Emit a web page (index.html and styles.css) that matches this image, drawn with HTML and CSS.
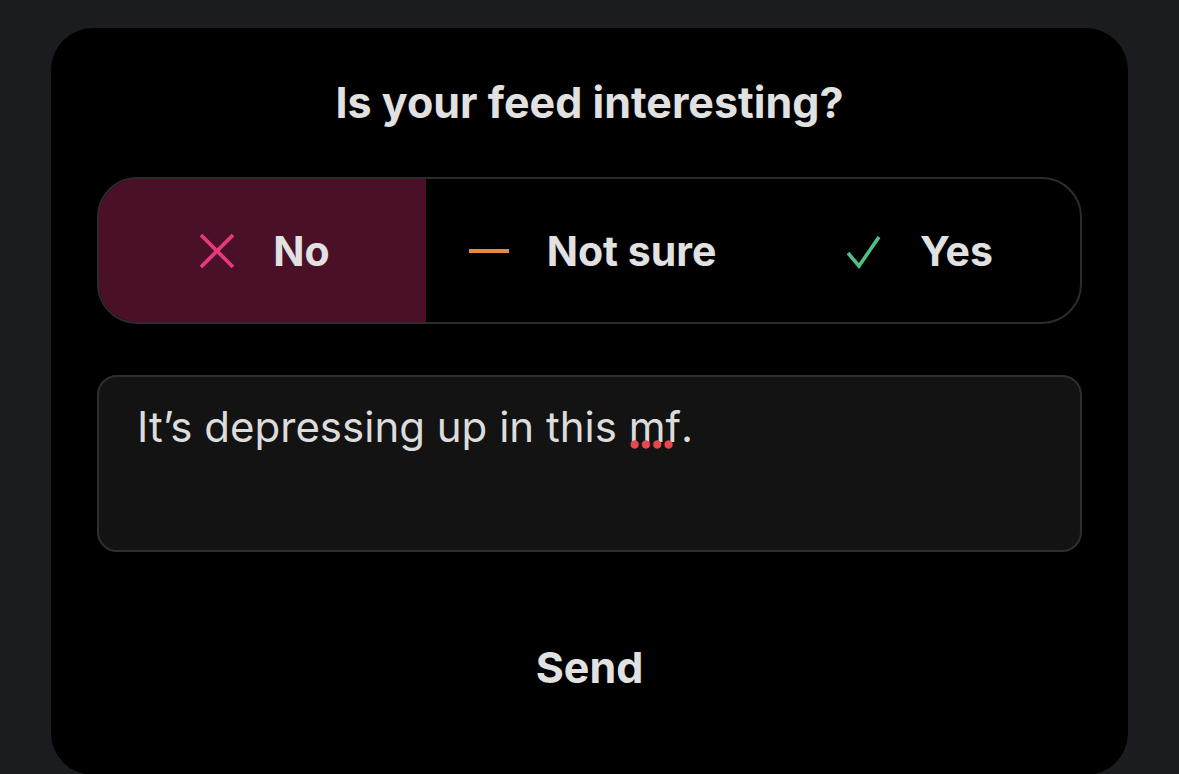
FILE: index.html
```html
<!DOCTYPE html>
<html lang="en">
<head>
    <meta charset="UTF-8">
    <meta name="viewport" content="width=device-width, initial-scale=1.0">
    <title>Feed feedback</title>
    <link rel="stylesheet" href="styles.css">
</head>
<body>

<div class="card">
    <h1 class="title">Is your feed interesting?</h1>

    <!-- choice buttons -->
    <div class="choices">
        <button class="choice selected">
            <svg class="icon" viewBox="0 0 36 36"><path d="M2 2 L34 34 M34 2 L2 34" stroke="#e8397f" stroke-width="3.8" fill="none"/></svg>
            <span>No</span>
        </button>
        <button class="choice">
            <svg class="icon wide" viewBox="0 0 40 36"><path d="M0 18 H40" stroke="#e98a3b" stroke-width="4" fill="none"/></svg>
            <span>Not sure</span>
        </button>
        <button class="choice">
            <svg class="icon" viewBox="0 0 36 36"><path d="M2 20 L13 33 L33 4" stroke="#4fbd86" stroke-width="3.6" fill="none"/></svg>
            <span>Yes</span>
        </button>
    </div>

    <!-- comment box -->
    <div class="comment">It’s depressing up in this <span class="typo">mf</span>.</div>

    <button class="send">Send</button>
</div>

</body>
</html>
```

FILE: styles.css
```css
body {
    margin: 0;
    padding-top: 28px;
    background-color: #1b1c20;
    font-family: "Inter", "Noto Sans", sans-serif;
    color: #e1e1e1;
}

.card {
    margin: 0 51px;
    height: 747px;
    background-color: #000;
    border-radius: 42px;
    padding: 0 46px;
    box-sizing: border-box;
}

.title {
    margin: 0;
    padding-top: 46px;
    height: 149px;
    box-sizing: border-box;
    text-align: center;
    font-size: 43px;
    font-weight: 700;
    line-height: 56px;
}

.choices {
    display: grid;
    grid-template-columns: 1fr 1fr 1fr;
    height: 147px;
    border: 2px solid #2c2c2e;
    border-radius: 40px;
    box-sizing: border-box;
    overflow: hidden;
}

.choice {
    display: flex;
    align-items: center;
    justify-content: center;
    gap: 38px;
    background: none;
    border: none;
    color: #e1e1e1;
    font-family: inherit;
    font-size: 41px;
    font-weight: 700;
    padding: 0 0 0 6px;
}

.choice.selected {
    background-color: #4a1028;
    box-shadow: inset 2px 0 0 #6a2a47, inset 0 2px 0 #6a2a47, inset 0 -2px 0 #6a2a47;
    margin: -2px 0 -2px -2px;
    border-radius: 40px 0 0 40px;
}

.icon {
    width: 36px;
    height: 36px;
}

.icon.wide {
    width: 40px;
}

.comment {
    margin-top: 51px;
    height: 177px;
    background-color: #131313;
    border: 2px solid #2e2e2e;
    border-radius: 20px;
    box-sizing: border-box;
    padding: 22px 38px;
    font-size: 42px;
    line-height: 56px;
    color: #dcdcdc;
}

/* spellcheck dots under the word */
.typo {
    position: relative;
}

.typo::after {
    content: "";
    position: absolute;
    left: 0;
    bottom: 3px;
    width: 45px;
    height: 9px;
    background: radial-gradient(circle closest-side, #e5484d 85%, transparent 100%) repeat-x;
    background-size: 11.3px 9px;
}

.send {
    display: block;
    margin: 88px auto 0;
    background: none;
    border: none;
    color: #e1e1e1;
    font-family: inherit;
    font-size: 43px;
    font-weight: 700;
}
```
